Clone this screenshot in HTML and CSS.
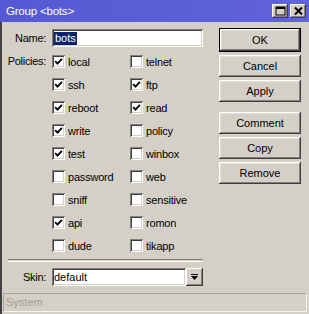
FILE: index.html
```html
<!DOCTYPE html>
<html lang="en">
<head>
    <meta charset="UTF-8">
    <title>Group &lt;bots&gt;</title>
    <link rel="stylesheet" href="styles.css">
</head>
<body>
    <div class="window">
        <div class="titlebar">
            <span class="title">Group &lt;bots&gt;</span>
            <div class="tb-buttons">
                <span class="tb-btn">
                    <svg width="11" height="10" viewBox="0 0 11 10"><rect x="1" y="1" width="9" height="8" fill="none" stroke="#000" stroke-width="1"/><rect x="1" y="1" width="9" height="2" fill="#000"/></svg>
                </span>
                <span class="tb-btn">
                    <svg width="11" height="10" viewBox="0 0 11 10"><path d="M2 1.5 L9 8.5 M9 1.5 L2 8.5" stroke="#000" stroke-width="2"/></svg>
                </span>
            </div>
        </div>

        <div class="frame">
            <div class="content">
                <div class="form">
                    <div class="row">
                        <span class="lbl">Name:</span>
                        <div class="field name-field"><span class="sel">bots</span></div>
                    </div>

                    <div class="policies">
                        <span class="lbl">Policies:</span>
                        <div class="checks">
                            <div class="check"><span class="box on"><svg width="9" height="9" viewBox="0 0 9 9"><path d="M1.2 4.2 L3.5 6.6 L7.9 1.8" fill="none" stroke="#000" stroke-width="1.9"/></svg></span>local</div>
                            <div class="check"><span class="box"></span>telnet</div>
                            <div class="check"><span class="box on"><svg width="9" height="9" viewBox="0 0 9 9"><path d="M1.2 4.2 L3.5 6.6 L7.9 1.8" fill="none" stroke="#000" stroke-width="1.9"/></svg></span>ssh</div>
                            <div class="check"><span class="box on"><svg width="9" height="9" viewBox="0 0 9 9"><path d="M1.2 4.2 L3.5 6.6 L7.9 1.8" fill="none" stroke="#000" stroke-width="1.9"/></svg></span>ftp</div>
                            <div class="check"><span class="box on"><svg width="9" height="9" viewBox="0 0 9 9"><path d="M1.2 4.2 L3.5 6.6 L7.9 1.8" fill="none" stroke="#000" stroke-width="1.9"/></svg></span>reboot</div>
                            <div class="check"><span class="box on"><svg width="9" height="9" viewBox="0 0 9 9"><path d="M1.2 4.2 L3.5 6.6 L7.9 1.8" fill="none" stroke="#000" stroke-width="1.9"/></svg></span>read</div>
                            <div class="check"><span class="box on"><svg width="9" height="9" viewBox="0 0 9 9"><path d="M1.2 4.2 L3.5 6.6 L7.9 1.8" fill="none" stroke="#000" stroke-width="1.9"/></svg></span>write</div>
                            <div class="check"><span class="box"></span>policy</div>
                            <div class="check"><span class="box on"><svg width="9" height="9" viewBox="0 0 9 9"><path d="M1.2 4.2 L3.5 6.6 L7.9 1.8" fill="none" stroke="#000" stroke-width="1.9"/></svg></span>test</div>
                            <div class="check"><span class="box"></span>winbox</div>
                            <div class="check"><span class="box"></span>password</div>
                            <div class="check"><span class="box"></span>web</div>
                            <div class="check"><span class="box"></span>sniff</div>
                            <div class="check"><span class="box"></span>sensitive</div>
                            <div class="check"><span class="box on"><svg width="9" height="9" viewBox="0 0 9 9"><path d="M1.2 4.2 L3.5 6.6 L7.9 1.8" fill="none" stroke="#000" stroke-width="1.9"/></svg></span>api</div>
                            <div class="check"><span class="box"></span>romon</div>
                            <div class="check"><span class="box"></span>dude</div>
                            <div class="check"><span class="box"></span>tikapp</div>
                        </div>
                    </div>

                    <div class="sep"></div>

                    <div class="row skin-row">
                        <span class="lbl">Skin:</span>
                        <div class="field skin-field">default</div>
                        <span class="drop">
                            <svg width="9" height="8" viewBox="0 0 9 8"><rect x="1" y="1" width="7" height="1" fill="#000"/><path d="M1 3 H8 L4.5 7 Z" fill="#000"/></svg>
                        </span>
                    </div>
                </div>

                <div class="buttons">
                    <button class="btn default">OK</button>
                    <button class="btn">Cancel</button>
                    <button class="btn">Apply</button>
                    <button class="btn spaced">Comment</button>
                    <button class="btn">Copy</button>
                    <button class="btn">Remove</button>
                </div>
            </div>

            <div class="status">System</div>
        </div>
    </div>
</body>
</html>
```

FILE: styles.css
```css
body {
    margin: 0;
    padding: 0;
    font-family: "Liberation Sans", Arial, sans-serif;
    font-size: 11px;
    color: #000;
    background: #d4d0c8;
}
.window {
    width: 309px;
    height: 314px;
    display: flex;
    flex-direction: column;
    background: #d4d0c8;
    overflow: hidden;
}
.titlebar {
    height: 22px;
    flex-shrink: 0;
    background: linear-gradient(to right, #5559d3, #6063da);
    display: flex;
    align-items: center;
    justify-content: space-between;
    padding: 0 3px 0 6px;
}
.title {
    color: #fff;
    font-size: 11.5px;
    letter-spacing: -0.2px;
}
.tb-buttons {
    display: flex;
    gap: 2px;
}
.tb-btn {
    width: 16px;
    height: 14px;
    background: #d4d0c8;
    box-shadow: inset -1px -1px #404040, inset 1px 1px #fff, inset -2px -2px #808080;
    display: flex;
    align-items: center;
    justify-content: center;
}
.frame {
    flex-grow: 1;
    border-left: 2px solid #404040;
    display: flex;
    flex-direction: column;
}
.content {
    display: flex;
    padding-top: 7px;
}
.form {
    width: 201px;
}
.row {
    display: flex;
    align-items: center;
    height: 18px;
}
.lbl {
    width: 44px;
    padding-right: 6px;
    text-align: right;
    letter-spacing: -0.3px;
    flex-shrink: 0;
}
.field {
    height: 18px;
    box-sizing: border-box;
    background: #fff;
    box-shadow: inset 1px 1px #808080, inset -1px -1px #fff, inset 2px 2px #404040, inset -2px -2px #d4d0c8;
    display: flex;
    align-items: center;
    padding-left: 2px;
}
.name-field {
    width: 151px;
}
.sel {
    background: #0a246a;
    color: #fff;
    padding: 0 1px;
    line-height: 13px;
}
.policies {
    display: flex;
    margin-top: 3px;
}
.policies .lbl {
    height: 23px;
    line-height: 23px;
}
.checks {
    display: grid;
    grid-template-columns: 78px 1fr;
    grid-auto-rows: 23px;
}
.check {
    display: flex;
    align-items: center;
    letter-spacing: -0.2px;
}
.box {
    width: 13px;
    height: 13px;
    box-sizing: border-box;
    background: #fff;
    box-shadow: inset 1px 1px #808080, inset -1px -1px #fff, inset 2px 2px #404040, inset -2px -2px #d4d0c8;
    margin-right: 3px;
    display: flex;
    align-items: center;
    justify-content: center;
}
.sep {
    margin: 2px 0 0 6px;
    width: 195px;
    height: 1px;
    border-top: 1px solid #808080;
    border-bottom: 1px solid #fff;
}
.skin-row {
    margin-top: 6px;
}
.skin-field {
    width: 134px;
}
.drop {
    width: 17px;
    height: 18px;
    box-sizing: border-box;
    background: #d4d0c8;
    box-shadow: inset -1px -1px #404040, inset 1px 1px #fff, inset -2px -2px #808080;
    display: flex;
    align-items: center;
    justify-content: center;
}
.buttons {
    margin-left: 16px;
    margin-top: -1px;
    width: 82px;
    display: flex;
    flex-direction: column;
    gap: 3px;
}
.btn {
    height: 22px;
    padding: 0;
    border: none;
    background: #d4d0c8;
    font-family: "Liberation Sans", Arial, sans-serif;
    font-size: 11px;
    color: #000;
    box-shadow: inset -1px -1px #404040, inset 1px 1px #fff, inset -2px -2px #808080, inset 2px 2px #e4e0d8;
}
.btn.default {
    height: 24px;
    border: 1px solid #000;
}
.btn.spaced {
    margin-top: 7px;
}
.status {
    margin: 7px 2px 0 1px;
    height: 19px;
    box-sizing: border-box;
    border: 1px solid #a8a59e;
    border-right-color: #f4f2ee;
    border-bottom-color: #f4f2ee;
    color: #a09d96;
    padding-left: 2px;
    line-height: 17px;
}
```
